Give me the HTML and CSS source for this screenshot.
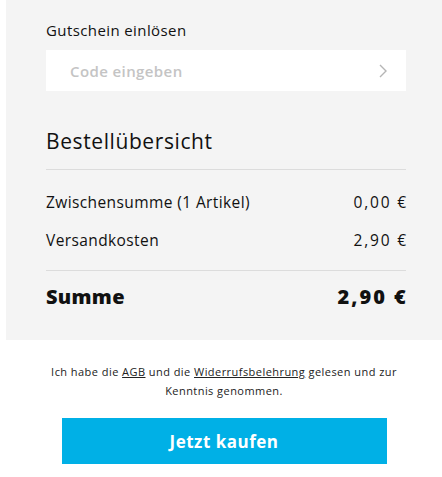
FILE: index.html
```html
<!DOCTYPE html>
<html lang="de">
<head>
<meta charset="UTF-8">
<meta name="viewport" content="width=device-width, initial-scale=1.0">
<title>Warenkorb</title>
<link rel="stylesheet" href="styles.css">
</head>
<body>
<div class="checkout">
    <div class="summary">
        <label class="voucher-label" for="voucher">Gutschein einlösen</label>
        <div class="voucher">
            <input type="text" id="voucher" placeholder="Code eingeben">
            <svg class="chevron" width="10" height="16" viewBox="0 0 10 16">
                <path d="M2 2 L8 8 L2 14" fill="none" stroke="#b5b5b5" stroke-width="1.4"/>
            </svg>
        </div>

        <h2>Bestellübersicht</h2>
        <div class="rows">
            <div class="row"><span>Zwischensumme (1 Artikel)</span><span class="amount">0,00 €</span></div>
            <div class="row"><span>Versandkosten</span><span class="amount">2,90 €</span></div>
        </div>
        <div class="row total"><span>Summe</span><span class="amount">2,90 €</span></div>
    </div>

    <div class="confirm">
        <p class="legal">Ich habe die <a href="#">AGB</a> und die <a href="#">Widerrufsbelehrung</a> gelesen und zur<br>Kenntnis genommen.</p>
        <button type="button">Jetzt kaufen</button>
    </div>
</div>
</body>
</html>
```

FILE: styles.css
```css
body {
    font-family: "Open Sans", sans-serif;
    background-color: #fff;
    margin: 0;
    color: #111;
}

.checkout {
    margin-left: 6px;
}

.summary {
    background-color: #f4f4f4;
    padding: 20px 36px 20px 40px;
}

.voucher-label {
    display: block;
    font-size: 15px;
    letter-spacing: 0.4px;
    line-height: 20px;
    margin-bottom: 10px;
}

.voucher {
    display: flex;
    align-items: center;
    background-color: #fff;
    height: 41px;
    padding: 0 18px 0 24px;
}

.voucher input {
    flex: 1;
    border: none;
    outline: none;
    font-family: inherit;
    font-size: 15px;
    font-weight: 600;
    letter-spacing: 0.4px;
    color: #333;
    padding: 0;
    background: transparent;
}

.voucher input::placeholder {
    color: #c4c4c4;
}

h2 {
    font-size: 21px;
    font-weight: 500;
    letter-spacing: 0.6px;
    margin: 0;
    padding: 36px 0 14px;
    line-height: 28px;
    border-bottom: 1px solid #dcdcdc;
}

.rows {
    padding: 10px 0;
    border-bottom: 1px solid #dcdcdc;
}

.row {
    display: flex;
    justify-content: space-between;
    font-size: 15.5px;
    letter-spacing: 0.4px;
    line-height: 20px;
    padding: 10px 0;
}

.rows .row:first-child {
    padding-top: 12px;
    padding-bottom: 8px;
}

.amount {
    letter-spacing: 1.8px;
    margin-right: -1.8px;
}

.row.total {
    font-size: 20px;
    font-weight: 800;
    letter-spacing: 0.3px;
    line-height: 26px;
    padding: 13px 0 10px;
}

.row.total .amount {
    letter-spacing: 2px;
}

.confirm {
    text-align: center;
    padding: 22px 0 20px;
}

.legal {
    font-size: 11px;
    letter-spacing: 0.45px;
    line-height: 19px;
    margin: 0 auto 18px;
    color: #222;
}

.legal a {
    color: #222;
}

button {
    width: 325px;
    height: 46px;
    border: none;
    background-color: #00b0e6;
    color: #fff;
    font-family: inherit;
    font-size: 17px;
    font-weight: 700;
    letter-spacing: 0.5px;
    cursor: pointer;
}
```
